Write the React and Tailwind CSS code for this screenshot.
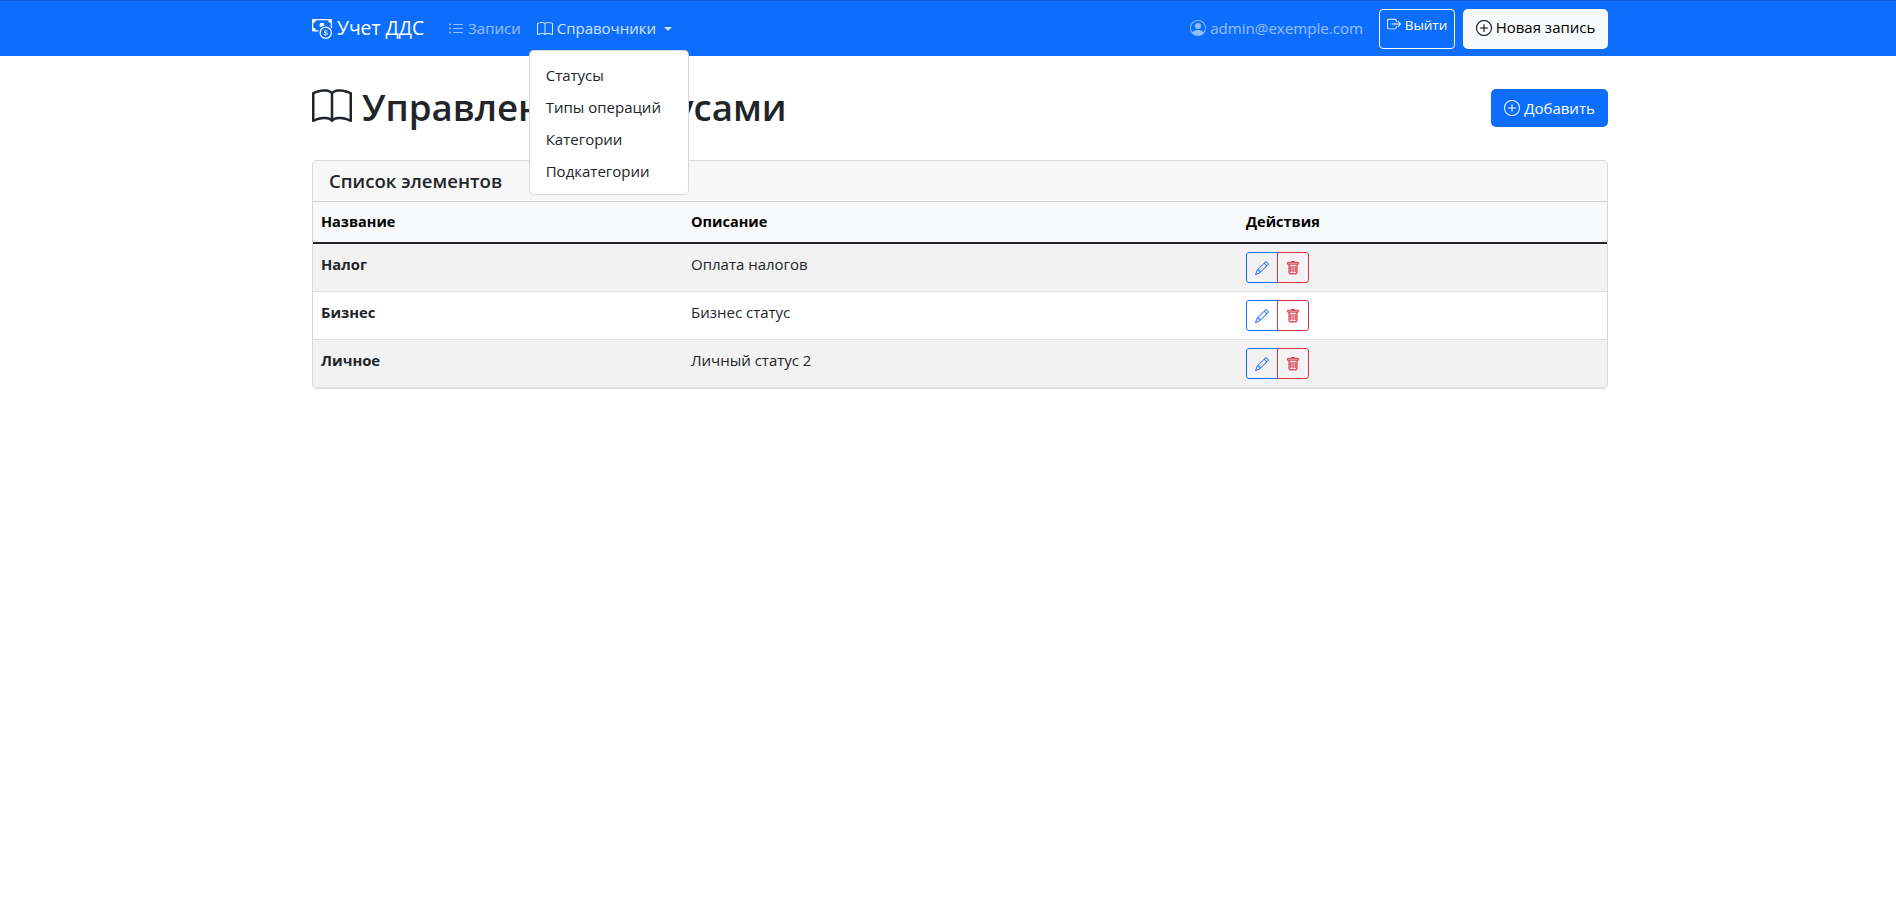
import React from "react";
import {
  BsCashCoin,
  BsListUl,
  BsBook,
  BsPersonCircle,
  BsBoxArrowRight,
  BsPlusCircle,
  BsPencil,
  BsTrash,
} from "react-icons/bs";

const rows = [
  { name: "Налог", desc: "Оплата налогов", striped: true },
  { name: "Бизнес", desc: "Бизнес статус", striped: false },
  { name: "Личное", desc: "Личный статус 2", striped: true },
];

const menuItems = ["Статусы", "Типы операций", "Категории", "Подкатегории"];

const App = () => {
  return (
    <div className="min-h-[916px] bg-white text-[#212529] font-['Open_Sans','Noto_Sans',sans-serif] text-[15px]">
      <nav className="h-14 bg-[#0d6efd] border-t border-[#0b5ed7]">
        <div className="w-[1296px] ml-[312px] h-full flex items-center justify-between">
          <div className="flex items-center">
            <a className="flex items-center text-[19.3px] text-white">
              <BsCashCoin className="w-5 h-5 mr-[5px]" />
              Учет ДДС
            </a>
            <a className="flex items-center ml-6 text-white/55">
              <BsListUl className="w-4 h-4 mr-1" />
              Записи
            </a>
            <div className="relative ml-4">
              <a className="flex items-center text-white/80">
                <BsBook className="w-4 h-4 mr-1" />
                Справочники
                <span className="ml-2 border-x-[4px] border-t-[4px] border-x-transparent border-t-white/80" />
              </a>
              <div className="absolute left-[-8px] top-[33px] z-10 w-[160px] h-[145px] py-2 bg-white border border-black/15 rounded-[5px]">
                {menuItems.map((item) => (
                  <div key={item} className="px-4 h-8 flex items-center text-[#212529]">
                    {item}
                  </div>
                ))}
              </div>
            </div>
          </div>
          <div className="flex items-center">
            <span className="flex items-center text-[15.1px] text-white/55">
              <BsPersonCircle className="w-4 h-4 mr-1" />
              admin@exemple.com
            </span>
            <button className="ml-4 h-10 w-[76px] flex items-start justify-center pt-[5px] text-[13.5px] font-medium text-white border border-white rounded-[4px]">
              <BsBoxArrowRight className="w-[14px] h-[14px] mr-1 mt-[2px]" />
              Выйти
            </button>
            <button className="ml-2 h-10 w-[145px] flex items-center justify-center pb-[2px] text-black bg-[#f8f9fa] rounded-[5px]">
              <BsPlusCircle className="w-4 h-4 mr-1" />
              Новая запись
            </button>
          </div>
        </div>
      </nav>

      <main className="w-[1296px] ml-[312px]">
        <div className="flex items-center justify-between pt-4 h-[88px]">
          <h1 className="flex items-center text-[36.6px] font-semibold leading-[48px] pb-[2px]">
            <BsBook className="w-10 h-10 mr-[10px]" />
            Управление статусами
          </h1>
          <button className="h-[38px] w-[117px] flex items-center justify-center text-white bg-[#0d6efd] rounded-[5px]">
            <BsPlusCircle className="w-4 h-4 mr-1" />
            Добавить
          </button>
        </div>

        <div className="mt-[16px] border border-black/15 rounded-[5px] overflow-hidden">
          <div className="h-[41px] pl-4 flex items-center bg-[#f7f7f7] border-b border-black/15 text-[18.6px] font-semibold">
            Список элементов
          </div>
          <table className="w-full border-collapse">
            <thead className="bg-[#f8f9fa] text-black">
              <tr className="h-[41px] border-b-2 border-[#212529]">
                <th className="w-[370px] px-2 text-left text-[14.5px] font-bold">Название</th>
                <th className="w-[555px] px-2 text-left text-[14.5px] font-bold">Описание</th>
                <th className="px-2 text-left text-[14.5px] font-bold">Действия</th>
              </tr>
            </thead>
            <tbody>
              {rows.map((row) => (
                <tr
                  key={row.name}
                  className={`h-12 border-b border-[#dee2e6] ${row.striped ? "bg-[#f2f2f2]" : "bg-white"}`}
                >
                  <td className="px-2 pt-[9px] pb-2 align-top text-[14.8px] font-bold">{row.name}</td>
                  <td className="px-2 pt-[9px] pb-2 align-top">{row.desc}</td>
                  <td className="px-2 pt-2 pb-2 align-top">
                    <div className="flex">
                      <button className="w-8 h-[31px] flex items-center justify-center text-[#0d6efd] border border-[#0d6efd] rounded-l-[3px]">
                        <BsPencil className="w-[14px] h-[14px]" />
                      </button>
                      <button className="w-8 -ml-px h-[31px] flex items-center justify-center text-[#dc3545] border border-[#dc3545] rounded-r-[3px]">
                        <BsTrash className="w-[14px] h-[14px]" stroke="currentColor" strokeWidth={0.4} />
                      </button>
                    </div>
                  </td>
                </tr>
              ))}
            </tbody>
          </table>
        </div>
      </main>
    </div>
  );
};

export default App;
